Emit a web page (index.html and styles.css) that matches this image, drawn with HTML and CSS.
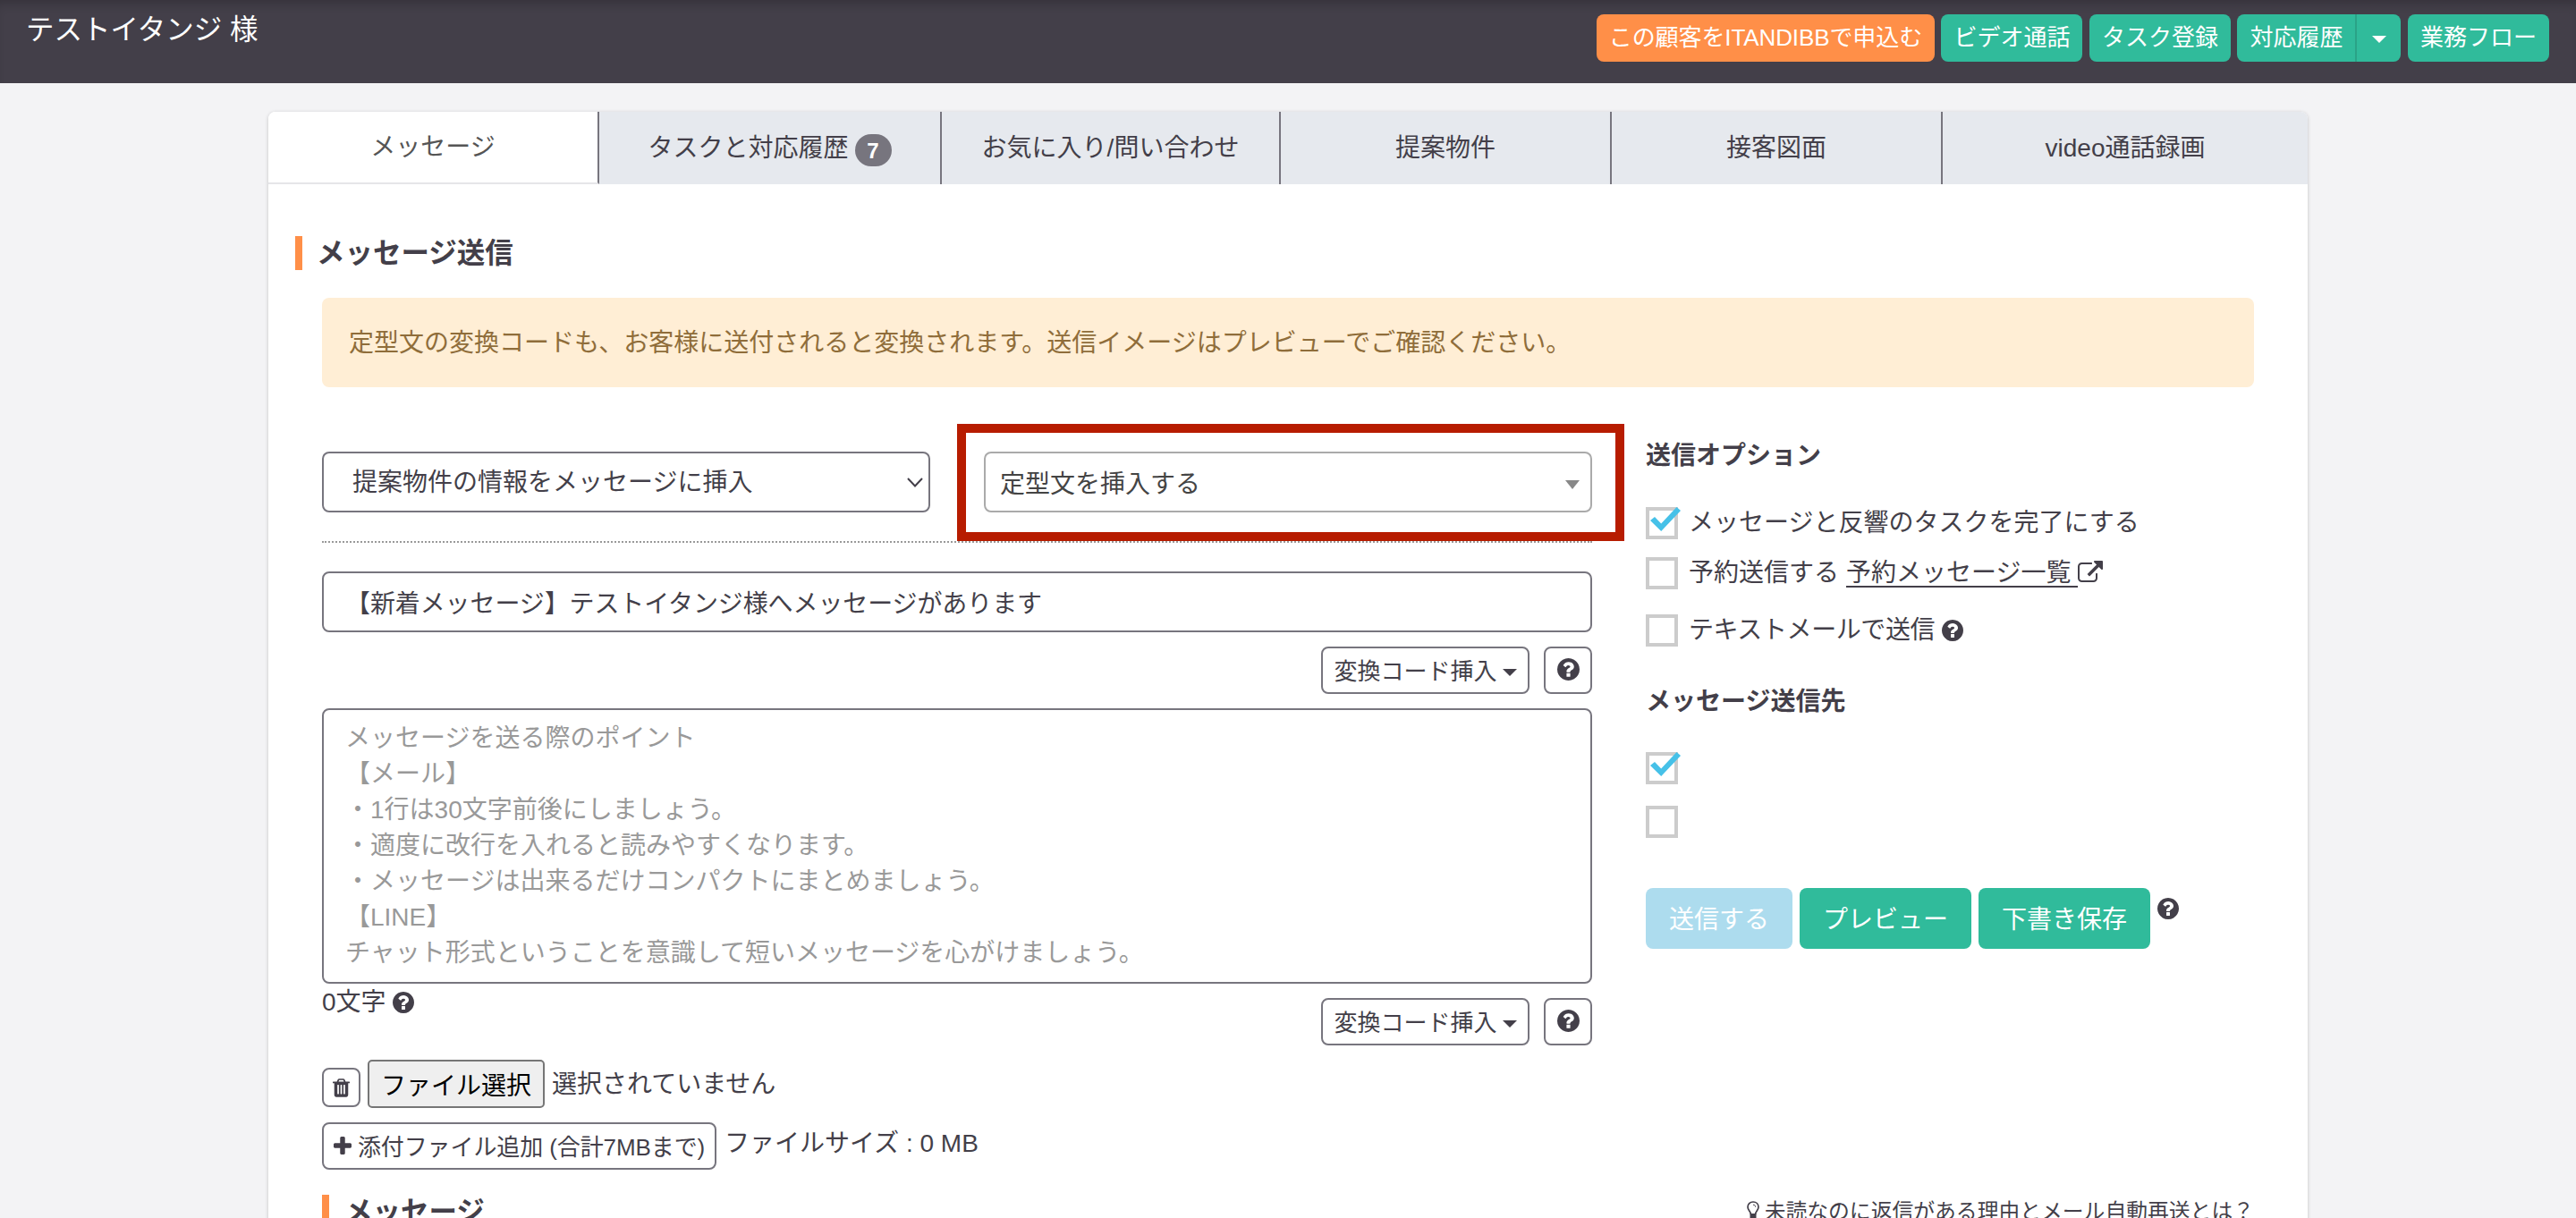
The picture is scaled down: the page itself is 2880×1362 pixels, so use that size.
FILE: index.html
```html
<!DOCTYPE html>
<html lang="ja">
<head>
    <meta charset="UTF-8">
    <meta name="viewport" content="width=device-width, initial-scale=1.0">
    <title>テストイタンジ 様 | メッセージ</title>
    <link rel="stylesheet" href="styles.css">
</head>
<body>
    <!-- icon set -->
    <svg class="icon-defs" width="0" height="0" aria-hidden="true">
        <symbol id="icon-question" viewBox="128 128 1536 1536"><path d="M1024 1376v-192q0-14-9-23t-23-9h-192q-14 0-23 9t-9 23v192q0 14 9 23t23 9h192q14 0 23-9t9-23zm256-672q0-88-55.5-163t-138.5-116-170-41q-243 0-371 213-15 24 8 42l132 100q7 6 19 6 16 0 25-12 53-68 86-92 34-24 86-24 48 0 85.5 26t37.5 59q0 38-20 61t-68 45q-63 28-115.5 86.5t-52.5 125.5v36q0 14 9 23t23 9h192q14 0 23-9t9-23q0-19 21.5-49.5t54.5-49.5q32-18 49-28.5t46-35 44.5-48 28-60.5 12.5-81zm384 192q0 209-103 385.5t-279.5 279.5-385.5 103-385.5-103-279.5-279.5-103-385.5 103-385.5 279.5-279.5 385.5-103 385.5 103 279.5 279.5 103 385.5z"/></symbol>
        <symbol id="icon-external" viewBox="0 0 1792 1536"><path d="M1408 928v320q0 119-84.5 203.5t-203.5 84.5h-832q-119 0-203.5-84.5t-84.5-203.5v-832q0-119 84.5-203.5t203.5-84.5h704q14 0 23 9t9 23v64q0 14-9 23t-23 9h-704q-66 0-113 47t-47 113v832q0 66 47 113t113 47h832q66 0 113-47t47-113v-320q0-14 9-23t23-9h64q14 0 23 9t9 23zm384-864v512q0 26-19 45t-45 19-45-19l-176-176-652 652q-10 10-23 10t-23-10l-114-114q-10-10-10-23t10-23l652-652-176-176q-19-19-19-45t19-45 45-19h512q26 0 45 19t19 45z"/></symbol>
        <symbol id="icon-trash" viewBox="192 128 1408 1536"><path d="M704 1376v-704q0-14-9-23t-23-9h-64q-14 0-23 9t-9 23v704q0 14 9 23t23 9h64q14 0 23-9t9-23zm256 0v-704q0-14-9-23t-23-9h-64q-14 0-23 9t-9 23v704q0 14 9 23t23 9h64q14 0 23-9t9-23zm256 0v-704q0-14-9-23t-23-9h-64q-14 0-23 9t-9 23v704q0 14 9 23t23 9h64q14 0 23-9t9-23zm-544-992h448l-48-117q-7-9-17-11h-317q-10 2-17 11zm928 32v64q0 14-9 23t-23 9h-96v948q0 83-47 143.5t-113 60.5h-832q-66 0-113-58.5t-47-141.5v-952h-96q-14 0-23-9t-9-23v-64q0-14 9-23t23-9h309l70-167q15-37 54-63t79-26h320q40 0 79 26t54 63l70 167h309q14 0 23 9t9 23z"/></symbol>
        <symbol id="icon-plus" viewBox="192 128 1408 1408"><path d="M1600 736v192q0 40-28 68t-68 28h-416v416q0 40-28 68t-68 28h-192q-40 0-68-28t-28-68v-416h-416q-40 0-68-28t-28-68v-192q0-40 28-68t68-28h416v-416q0-40 28-68t68-28h192q40 0 68 28t28 68v416h416q40 0 68 28t28 68z"/></symbol>
        <symbol id="icon-bulb" viewBox="0 0 14 24"><path d="M4.500 15C4.500 12 1 10.500 1 6.800C1 3.400 3.600 1 7 1s6 2.400 6 5.800c0 3.700-3.500 5.200-3.500 8.200" fill="none" stroke="currentColor" stroke-width="1.700"/><path d="M7 4.200c1.600 0 2.700 1 2.700 2.500" fill="none" stroke="currentColor"/><path d="M3.500 14h7v6.500L9 23H5l-1.500-2.500z"/></symbol>
        <symbol id="icon-check" viewBox="4 4 28 28"><path d="M5 15l5-4 7.200 7.500L34.500 0l4.500 4L17.200 27z"/></symbol>
    </svg>

    <header class="navbar">
        <div class="customer-name">テストイタンジ 様</div>
        <div class="nav-actions">
            <button class="btn btn-orange">この顧客をITANDIBBで申込む</button>
            <button class="btn">ビデオ通話</button>
            <button class="btn">タスク登録</button>
            <div class="btn-group">
                <button class="btn">対応履歴</button>
                <button class="btn btn-toggle"><span class="caret"></span></button>
            </div>
            <button class="btn">業務フロー</button>
        </div>
    </header>

    <main class="container">
        <nav class="tabs">
            <a class="tab active">メッセージ</a>
            <a class="tab tab-tasks">タスクと対応履歴<span class="badge">7</span></a>
            <a class="tab tab-favorite">お気に入り/問い合わせ</a>
            <a class="tab">提案物件</a>
            <a class="tab">接客図面</a>
            <a class="tab tab-video">video通話録画</a>
        </nav>

        <h2 class="section-title">メッセージ送信</h2>
        <div class="alert">定型文の変換コードも、お客様に送付されると変換されます。送信イメージはプレビューでご確認ください。</div>

        <div class="columns">
            <section class="compose">
                <div class="selects">
                    <div class="select-wrap">
                        <select class="field">
                            <option>提案物件の情報をメッセージに挿入</option>
                        </select>
                        <svg class="chevron" viewBox="0 0 18 11"><path d="M1 1l8 8.500L17 1"/></svg>
                    </div>
                    <div class="template-select">
                        <span>定型文を挿入する</span>
                        <span class="caret"></span>
                        <div class="highlight"></div>
                    </div>
                </div>
                <div class="divider"></div>
                <input class="field subject" type="text" value="【新着メッセージ】テストイタンジ様へメッセージがあります">
                <div class="tools">
                    <button class="btn-outline">変換コード挿入<span class="caret"></span></button>
                    <button class="btn-outline btn-help"><svg class="icon"><use href="#icon-question"/></svg></button>
                </div>
                <textarea class="field body-text" placeholder="メッセージを送る際のポイント
【メール】
・1行は30文字前後にしましょう。
・適度に改行を入れると読みやすくなります。
・メッセージは出来るだけコンパクトにまとめましょう。
【LINE】
チャット形式ということを意識して短いメッセージを心がけましょう。"></textarea>
                <div class="under-text">
                    <div class="counter">0文字<svg class="icon"><use href="#icon-question"/></svg></div>
                    <div class="tools">
                        <button class="btn-outline">変換コード挿入<span class="caret"></span></button>
                        <button class="btn-outline btn-help"><svg class="icon"><use href="#icon-question"/></svg></button>
                    </div>
                </div>
                <div class="file-row">
                    <button class="btn-outline btn-trash"><svg class="icon"><use href="#icon-trash"/></svg></button>
                    <button class="btn-file">ファイル選択</button>
                    <span>選択されていません</span>
                </div>
                <div class="attach-row">
                    <button class="btn-outline btn-attach"><svg class="icon"><use href="#icon-plus"/></svg>添付ファイル追加 (合計7MBまで)</button>
                    <span>ファイルサイズ : 0 MB</span>
                </div>
            </section>

            <aside class="options">
                <h3>送信オプション</h3>
                <label class="check"><span class="box"><svg><use href="#icon-check"/></svg></span>メッセージと反響のタスクを完了にする</label>
                <div class="check check-reserve"><span class="box"></span>予約送信する<a class="link">予約メッセージ一覧</a><svg class="icon-ext"><use href="#icon-external"/></svg></div>
                <div class="check check-text"><span class="box"></span>テキストメールで送信<svg class="icon"><use href="#icon-question"/></svg></div>
                <h3 class="dest-title">メッセージ送信先</h3>
                <div class="check"><span class="box"><svg><use href="#icon-check"/></svg></span></div>
                <div class="check check-dest"><span class="box"></span></div>
                <div class="send-buttons">
                    <button class="btn-lg btn-disabled">送信する</button>
                    <button class="btn-lg">プレビュー</button>
                    <button class="btn-lg">下書き保存</button>
                    <svg class="icon"><use href="#icon-question"/></svg>
                </div>
            </aside>
        </div>

        <div class="history-head">
            <h2>メッセージ</h2>
            <a class="hint"><svg class="icon-bulb"><use href="#icon-bulb"/></svg>未読なのに返信がある理由とメール自動再送とは？</a>
        </div>
    </main>
</body>
</html>
```

FILE: styles.css
```css
* {
    box-sizing: border-box;
}
body {
    margin: 0;
    height: 1362px;
    overflow: hidden;
    background-color: #f3f3f5;
    color: #433f49;
    font-family: "Liberation Sans", "Noto Sans CJK JP", sans-serif;
    font-size: 28px;
    line-height: 40px;
}
button, input, select, textarea {
    font-family: inherit;
    color: inherit;
    margin: 0;
}
h2, h3 {
    margin: 0;
}
.icon-defs {
    position: absolute;
}
.icon {
    width: 24px;
    height: 24px;
    flex: none;
    fill: currentColor;
}
.caret {
    border: 8px solid transparent;
    border-top-color: currentColor;
    border-bottom: 0;
}

/* header */
.navbar {
    display: flex;
    justify-content: space-between;
    height: 93px;
    padding: 16px 30px 0 29px;
    background-color: #433f49;
    box-shadow: inset 0 10px 12px -6px rgba(0,0,0,0.2);
    color: #fff;
}
.customer-name {
    font-size: 31.5px;
    line-height: 35px;
}
.nav-actions {
    display: flex;
    gap: 7.5px;
}
.btn {
    height: 53px;
    padding: 0 14px;
    border: none;
    border-radius: 8px;
    background-color: #30bb9b;
    color: #fff;
    font-size: 26px;
    line-height: 51px;
}
.btn-orange {
    width: 378px;
    padding: 0 0 1px;
    background-color: #ff8f48;
    letter-spacing: -0.1px;
}
.btn-group {
    display: flex;
}
.btn-group .btn:first-child {
    border-radius: 8px 0 0 8px;
}
.btn-group .btn-toggle {
    display: flex;
    align-items: center;
    justify-content: center;
    width: 51px;
    padding: 2px 0 0;
    border-left: 2px solid #2aa387;
    border-radius: 0 8px 8px 0;
}

/* tabs */
.container {
    width: 2280px;
    height: 1300px;
    margin: 32px auto 0;
    border-radius: 8px;
    background-color: #fff;
    box-shadow: 0 1px 4px rgba(0,0,0,0.2);
    overflow: hidden;
}
.tabs {
    display: flex;
    height: 81px;
}
.tab {
    display: flex;
    align-items: center;
    justify-content: center;
    width: 370px;
    border-right: 2px solid #77757e;
    background-color: #e6e9ee;
}
.tab.active {
    border-bottom: 2px solid #e6e6e8;
    background-color: #fff;
    color: #555;
}
.tab-tasks {
    width: 383px;
}
.tab-favorite {
    width: 379px;
}
.tab-video {
    width: 408px;
    border-right: none;
}
.badge {
    width: 41px;
    height: 36px;
    margin: 5px 0 0 7px;
    border-radius: 18px;
    background-color: #77757e;
    color: #fff;
    font-size: 24px;
    font-weight: bold;
    line-height: 38px;
    text-align: center;
}

.section-title {
    height: 38px;
    margin: 58px 0 31px 30px;
    padding-left: 16px;
    border-left: 8px solid #ff8f48;
    font-size: 31.5px;
    line-height: 38px;
}
.alert {
    height: 100px;
    margin: 0 60px 72px;
    padding: 0 30px;
    border-radius: 8px;
    background-color: #ffeed5;
    color: #8f6d3a;
    line-height: 102px;
}
.columns {
    display: flex;
    gap: 60px;
    padding: 0 60px;
}

/* message form */
.compose {
    width: 1420px;
}
.field {
    display: block;
    width: 100%;
    height: 68px;
    padding: 0 24px;
    border: 2px solid #77757e;
    border-radius: 8px;
    background-color: #fff;
    font-size: 28px;
    outline: none;
    resize: none;
    appearance: none;
}
.selects {
    display: grid;
    grid-template-columns: 1fr 1fr;
    gap: 60px;
}
.select-wrap, .template-select {
    position: relative;
}
.select-wrap .field {
    padding: 1px 32px 0;
    line-height: 40px;
}
.chevron {
    position: absolute;
    right: 8px;
    top: 29px;
    width: 18px;
    height: 11px;
    fill: none;
    stroke: #433f49;
    stroke-width: 2;
}
.template-select {
    display: flex;
    align-items: center;
    justify-content: space-between;
    height: 68px;
    padding: 5px 12px 0 16px;
    border: 2px solid #aaa;
    border-radius: 8px;
    color: #444;
}
.template-select .caret {
    border-width: 10px 8px 0;
    color: #888;
}
.highlight {
    position: absolute;
    left: -32px;
    top: -33px;
    width: 746px;
    height: 131px;
    border: 10px solid #b71c00;
}
.divider {
    margin: 32px 0;
    border-top: 2px dotted #999;
}
.subject {
    padding-bottom: 1px;
    letter-spacing: -0.1px;
}
.tools {
    display: flex;
    justify-content: flex-end;
    gap: 16px;
    margin: 16px 0;
}
.btn-outline {
    display: flex;
    align-items: center;
    justify-content: center;
    width: 233px;
    height: 53px;
    padding: 0 0 2px;
    border: 2px solid #77757e;
    border-radius: 8px;
    background-color: #fff;
    font-size: 26px;
}
.btn-outline .caret {
    margin: 6px 0 0 6px;
}
.btn-help {
    width: 54px;
}
.btn-help .icon {
    width: 25px;
    height: 25px;
    margin-bottom: 1px;
}
.body-text {
    height: 308px;
    padding-top: 12px;
    line-height: 40px;
}
.body-text::placeholder {
    color: #999;
    opacity: 1;
}
.under-text {
    display: flex;
    justify-content: space-between;
}
.counter {
    display: flex;
    align-items: center;
    height: 41px;
    gap: 7px;
}
.file-row {
    display: flex;
    gap: 8px;
    height: 54px;
}
.file-row span {
    line-height: 56px;
}
.btn-trash {
    width: 43px;
    height: 44px;
    margin-top: 9px;
    padding: 0;
}
.btn-trash .icon {
    width: 19px;
    height: 21px;
}
.btn-file {
    width: 198px;
    padding: 0 0 1px;
    border: 2px solid #767676;
    border-radius: 5px;
    background-color: #efefef;
    color: #000;
    font-size: 28px;
}
.attach-row {
    display: flex;
    gap: 9px;
    margin-top: 16px;
}
.attach-row span {
    line-height: 48px;
}
.btn-attach {
    width: 441px;
    gap: 7px;
    letter-spacing: -0.1px;
}
.btn-attach .icon {
    width: 20px;
    height: 20px;
}

/* send options */
.options {
    width: 680px;
}
.options h3 {
    height: 40px;
    margin: -16px 0 38px;
    font-size: 28px;
    line-height: 41px;
}
.options .dest-title {
    margin: 41px 0 37px;
}
.check {
    display: flex;
    align-items: center;
    height: 36px;
    line-height: 38px;
}
.box {
    width: 36px;
    height: 36px;
    margin-right: 12px;
    border: 4px solid #ccc;
}
.box svg {
    display: block;
    width: 28px;
    height: 28px;
    overflow: visible;
    fill: #46c1e8;
}
#icon-check {
    overflow: visible;
}
.check-reserve {
    margin-top: 20px;
}
.link {
    height: 32px;
    margin-left: 8px;
    padding-right: 8px;
    border-bottom: 2px solid #433f49;
    line-height: 32px;
}
.icon-ext {
    width: 28px;
    height: 24px;
    margin-bottom: 4px;
    fill: currentColor;
}
.check-text {
    margin-top: 28px;
    letter-spacing: -0.4px;
}
.check-text .icon {
    margin-left: 8px;
}
.check-dest {
    margin-top: 24px;
}
.send-buttons {
    display: flex;
    gap: 8px;
    margin-top: 56px;
}
.btn-lg {
    width: 192px;
    height: 68px;
    padding: 0 0 2px;
    border: none;
    border-radius: 8px;
    background-color: #30bb9b;
    color: #fff;
    font-size: 28px;
}
.btn-disabled {
    width: 164px;
    background-color: #addcee;
}
.send-buttons .icon {
    margin-top: 11px;
}

/* message history */
.history-head {
    display: flex;
    justify-content: space-between;
    height: 38px;
    margin: 28px 60px 0;
}
.history-head h2 {
    padding-left: 17px;
    border-left: 8px solid #ff8f48;
    font-size: 31.5px;
    line-height: 38px;
}
.hint {
    display: flex;
    align-items: flex-start;
    font-size: 23.800px;
    line-height: 37px;
}
.icon-bulb {
    width: 14px;
    height: 24px;
    margin: 7px 6px 0 0;
    color: #433f49;
    fill: currentColor;
}
```
